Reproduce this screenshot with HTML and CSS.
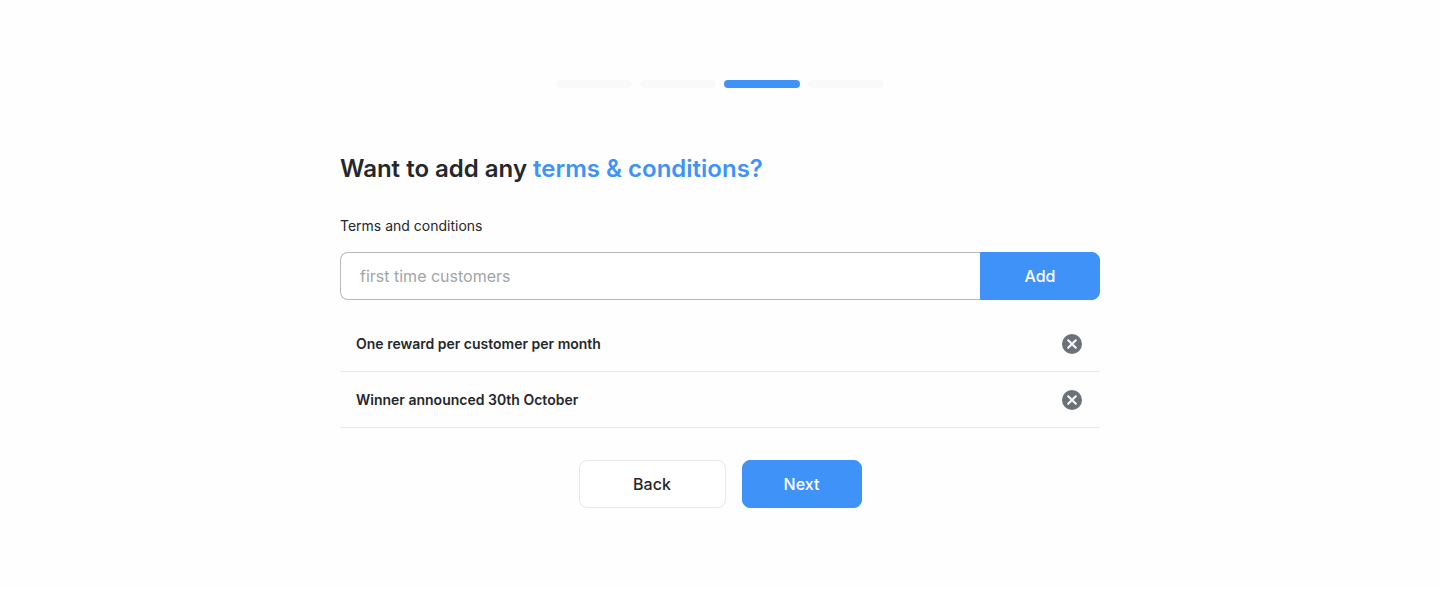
FILE: index.html
```html
<!DOCTYPE html>
<html lang="en">
<head>
<meta charset="utf-8">
<meta name="viewport" content="width=device-width, initial-scale=1">
<title>Terms &amp; conditions</title>
<link rel="stylesheet" href="styles.css">
</head>
<body>
<main class="page">
  <ol class="steps" aria-label="Progress">
    <li class="step"></li>
    <li class="step"></li>
    <li class="step step-current" aria-current="step"></li>
    <li class="step"></li>
  </ol>
  <form class="form">
    <h1 class="title">Want to add any <span class="accent">terms &amp; conditions?</span></h1>
    <label class="label" for="term">Terms and conditions</label>
    <div class="field">
      <input class="input" id="term" type="text" placeholder="first time customers">
      <button class="button button-primary button-add" type="button">Add</button>
    </div>
    <ul class="terms">
      <li class="term">
        <span>One reward per customer per month</span>
        <button class="remove" type="button" aria-label="Remove One reward per customer per month">
          <svg class="icon" viewBox="0 0 20 20" aria-hidden="true"><circle cx="10" cy="10" r="10" fill="#6c7078"/><path d="M6.2 6.2l7.6 7.6M13.8 6.2l-7.6 7.6" stroke="#fff" stroke-width="2" stroke-linecap="round"/></svg>
        </button>
      </li>
      <li class="term">
        <span>Winner announced 30th October</span>
        <button class="remove" type="button" aria-label="Remove Winner announced 30th October">
          <svg class="icon" viewBox="0 0 20 20" aria-hidden="true"><circle cx="10" cy="10" r="10" fill="#6c7078"/><path d="M6.2 6.2l7.6 7.6M13.8 6.2l-7.6 7.6" stroke="#fff" stroke-width="2" stroke-linecap="round"/></svg>
        </button>
      </li>
    </ul>
    <div class="actions">
      <button class="button button-back" type="button">Back</button>
      <button class="button button-primary button-next" type="submit">Next</button>
    </div>
  </form>
</main>
</body>
</html>
```
FILE: styles.css
```css
*,
*::before,
*::after {
  box-sizing: border-box;
}

body {
  margin: 0;
  background: #fefefe;
  color: #25282b;
  font-family: Inter, "Liberation Sans", sans-serif;
}

.page {
  display: flex;
  flex-direction: column;
  align-items: center;
  gap: 64px;
  padding: 80px 24px;
}

.steps {
  display: flex;
  gap: 8px;
  margin: 0;
  padding: 0;
  list-style: none;
}

.step {
  width: 76px;
  height: 8px;
  border-radius: 4px;
  background: #f9f9f9;
}

.step-current {
  background: #3f93f8;
}

.form {
  display: flex;
  flex-direction: column;
  width: 100%;
  max-width: 760px;
}

.title {
  margin: 0 0 30px;
  font-size: 24px;
  font-weight: 600;
  line-height: 34px;
}

.accent {
  color: #3f93f8;
}

.label {
  margin-bottom: 16px;
  font-size: 14px;
  line-height: 20px;
}

.field {
  display: flex;
}

.input {
  flex: 1;
  min-width: 0;
  height: 48px;
  padding: 0 19px;
  border: 1px solid #b8bbbd;
  border-right: 0;
  border-radius: 8px 0 0 8px;
  background: #fff;
  color: inherit;
  font: 400 16px/24px Inter, "Liberation Sans", sans-serif;
}

.input::placeholder {
  color: #a0a4a8;
  opacity: 1;
}

.button {
  height: 48px;
  border: 1px solid transparent;
  border-radius: 8px;
  font: 500 16px/24px Inter, "Liberation Sans", sans-serif;
  cursor: pointer;
}

.button-primary {
  width: 120px;
  border-color: #3f93f8;
  background: #3f93f8;
  color: #fff;
}

.button-add {
  border-radius: 0 8px 8px 0;
}

.button-back {
  width: 147px;
  border-color: #e8e8e8;
  background: #fff;
  color: #25282b;
}

.terms {
  margin: 16px 0 32px;
  padding: 0;
  list-style: none;
}

.term {
  display: flex;
  align-items: center;
  justify-content: space-between;
  height: 56px;
  padding: 0 18px 0 16px;
  border-bottom: 1px solid #e8e8e8;
  font-size: 14px;
  font-weight: 600;
  line-height: 20px;
}

.remove {
  display: flex;
  padding: 0;
  border: 0;
  border-radius: 50%;
  background: none;
  cursor: pointer;
}

.icon {
  display: block;
  width: 20px;
  height: 20px;
}

.actions {
  display: flex;
  justify-content: center;
  gap: 16px;
}
```
